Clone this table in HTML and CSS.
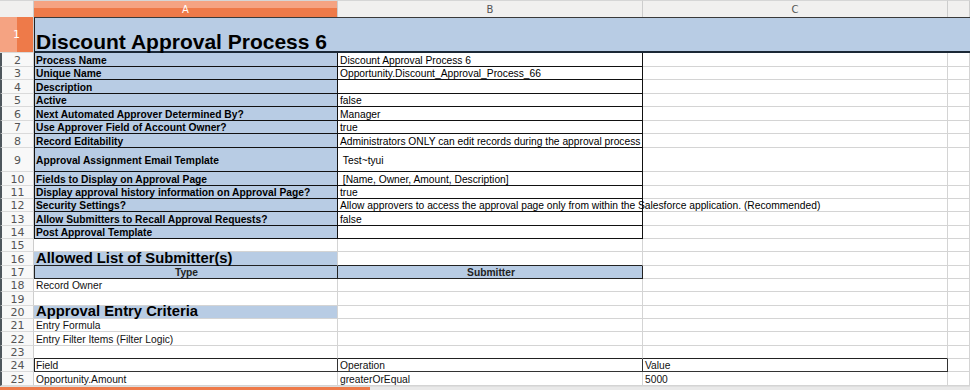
FILE: index.html
```html
<!DOCTYPE html>
<html lang="en">
<head>
<meta charset="utf-8">
<title>Discount Approval Process 6</title>
<link rel="stylesheet" href="styles.css">
</head>
<body>
<div class="sheet">
  <div class="corner"></div>
  <div class="ch sel">A</div>
  <div class="ch">B</div>
  <div class="ch">C</div>
  <div class="ch"></div>

  <div class="rh sel">1</div>
  <div class="title">Discount Approval Process 6</div>

  <div class="rh">2</div><div class="c lbl">Process Name</div><div class="c val">Discount Approval Process 6</div><div class="c"></div><div class="c"></div>
  <div class="rh">3</div><div class="c lbl">Unique Name</div><div class="c val">Opportunity.Discount_Approval_Process_66</div><div class="c"></div><div class="c"></div>
  <div class="rh">4</div><div class="c lbl">Description</div><div class="c val"></div><div class="c"></div><div class="c"></div>
  <div class="rh">5</div><div class="c lbl">Active</div><div class="c val">false</div><div class="c"></div><div class="c"></div>
  <div class="rh">6</div><div class="c lbl">Next Automated Approver Determined By?</div><div class="c val">Manager</div><div class="c"></div><div class="c"></div>
  <div class="rh">7</div><div class="c lbl">Use Approver Field of Account Owner?</div><div class="c val">true</div><div class="c"></div><div class="c"></div>
  <div class="rh">8</div><div class="c lbl">Record Editability</div><div class="c val">Administrators ONLY can edit records during the approval process</div><div class="c"></div><div class="c"></div>
  <div class="rh mid">9</div><div class="c lbl mid">Approval Assignment Email Template</div><div class="c val mid">&nbsp;Test~tyui</div><div class="c"></div><div class="c"></div>
  <div class="rh">10</div><div class="c lbl">Fields to Display on Approval Page</div><div class="c val">&nbsp;[Name, Owner, Amount, Description]</div><div class="c"></div><div class="c"></div>
  <div class="rh">11</div><div class="c lbl">Display approval history information on Approval Page?</div><div class="c val">true</div><div class="c"></div><div class="c"></div>
  <div class="rh">12</div><div class="c lbl">Security Settings?</div><div class="c val">Allow approvers to access the approval page only from within the Salesforce application. (Recommended)</div><div class="c"></div><div class="c"></div>
  <div class="rh">13</div><div class="c lbl">Allow Submitters to Recall Approval Requests?</div><div class="c val">false</div><div class="c"></div><div class="c"></div>
  <div class="rh">14</div><div class="c lbl">Post Approval Template</div><div class="c val"></div><div class="c"></div><div class="c"></div>

  <div class="rh">15</div><div class="c"></div><div class="c"></div><div class="c"></div><div class="c"></div>
  <div class="rh">16</div><div class="c sec bb">Allowed List of Submitter(s)</div><div class="c bb"></div><div class="c"></div><div class="c"></div>
  <div class="rh">17</div><div class="c hdr bl">Type</div><div class="c hdr">Submitter</div><div class="c"></div><div class="c"></div>
  <div class="rh">18</div><div class="c">Record Owner</div><div class="c"></div><div class="c"></div><div class="c"></div>
  <div class="rh">19</div><div class="c"></div><div class="c"></div><div class="c"></div><div class="c"></div>
  <div class="rh">20</div><div class="c sec">Approval Entry Criteria</div><div class="c"></div><div class="c"></div><div class="c"></div>
  <div class="rh">21</div><div class="c">Entry Formula</div><div class="c"></div><div class="c"></div><div class="c"></div>
  <div class="rh">22</div><div class="c">Entry Filter Items (Filter Logic)</div><div class="c"></div><div class="c"></div><div class="c"></div>
  <div class="rh">23</div><div class="c bb"></div><div class="c bb"></div><div class="c bb"></div><div class="c"></div>
  <div class="rh">24</div><div class="c box bl">Field</div><div class="c box">Operation</div><div class="c box">Value</div><div class="c"></div>
  <div class="rh">25</div><div class="c">Opportunity.Amount</div><div class="c">greaterOrEqual</div><div class="c">5000</div><div class="c"></div>
</div>
<div class="bottom">
  <div class="tab"></div>
  <div class="rest"></div>
</div>
</body>
</html>
```

FILE: styles.css
```css
html, body {
  margin: 0;
  padding: 0;
  background: #fff;
}

body {
  width: 970px;
  height: 390px;
  overflow: hidden;
  font-family: "Liberation Sans", Arial, sans-serif;
}

.sheet {
  display: grid;
  grid-template-columns: 34px 304px 305px 305px 22px;
  grid-template-rows:
    17px 36px
    14px 13px 14px 13px 14px 13px 14px
    24px
    14px 13px 13px 14px 13px 13px 14px 13px
    13px 14px 13px 13px 14px 13px 13px 14px;
}

.corner {
  background: #f1f0ef;
  border-top: 1px solid #d6d6d6;
  border-right: 1px solid #cdcdcd;
  box-sizing: border-box;
}

.ch {
  box-sizing: border-box;
  background: #f1f0ef;
  border-top: 1px solid #d6d6d6;
  border-right: 1px solid #cdcdcd;
  display: flex;
  align-items: center;
  justify-content: center;
  font-family: "DejaVu Sans", sans-serif;
  font-size: 10px;
  color: #555;
  padding-top: 1px;
}

.ch.sel {
  background: linear-gradient(#f5a382 0, #f5a382 7px, #ee7a49 7px);
  color: #fff;
}

.rh {
  box-sizing: border-box;
  background: #f8f8f8;
  border-left: 2px solid #4f575d;
  border-right: 1px solid #cdcdcd;
  border-bottom: 1px solid #dadada;
  display: flex;
  align-items: flex-end;
  justify-content: center;
  font-family: "DejaVu Sans", sans-serif;
  font-size: 11px;
  line-height: 11px;
  color: #555;
}

.rh.sel {
  border-left: 0;
  background: linear-gradient(to right, #f5a382 0, #f5a382 17px, #ee7a49 17px);
  color: #fff;
  align-items: center;
}

.rh.mid {
  align-items: center;
  padding-top: 2px;
}

.title {
  grid-column: 2 / 6;
  box-sizing: border-box;
  background: #b8cce4;
  border-top: 1px solid #3a3a3a;
  border-left: 1px solid #222;
  border-bottom: 2px solid #1b2836;
  display: flex;
  align-items: flex-end;
  padding-left: 1px;
  font-weight: bold;
  font-size: 21px;
  line-height: 19px;
  color: #000;
  white-space: nowrap;
}

.c {
  box-sizing: border-box;
  border-right: 1px solid #d4d4d4;
  border-bottom: 1px solid #d4d4d4;
  display: flex;
  align-items: flex-end;
  padding-left: 2px;
  font-size: 10.25px;
  line-height: 10px;
  color: #111;
  white-space: nowrap;
  min-width: 0;
}

.lbl {
  background: #b8cce4;
  font-weight: bold;
  color: #000;
  border-left: 1px solid #111;
  border-right-color: #111;
  border-bottom-color: #111;
  padding-left: 1px;
}

.val {
  border-right-color: #111;
  border-bottom-color: #111;
  color: #000;
}

.mid {
  align-items: center;
  padding-top: 2px;
}

.sec {
  background: #b8cce4;
  font-weight: bold;
  font-size: 14.8px;
  color: #000;
  padding-bottom: 2px;
}

.bb {
  border-bottom-color: #222;
}

.bl {
  border-left: 1px solid #222;
  padding-left: 1px;
}

.hdr {
  background: #b8cce4;
  font-weight: bold;
  color: #222;
  justify-content: center;
  border-right-color: #222;
  border-bottom-color: #222;
}

.box {
  border-right-color: #333;
  border-bottom-color: #333;
  color: #111;
}

.bottom {
  display: flex;
  height: 4px;
  box-sizing: border-box;
  border-top: 1px solid #dedede;
}

.tab {
  width: 370px;
  background: #ee7a49;
}

.rest {
  flex: 1;
  background: #e9e9e9;
}
```
